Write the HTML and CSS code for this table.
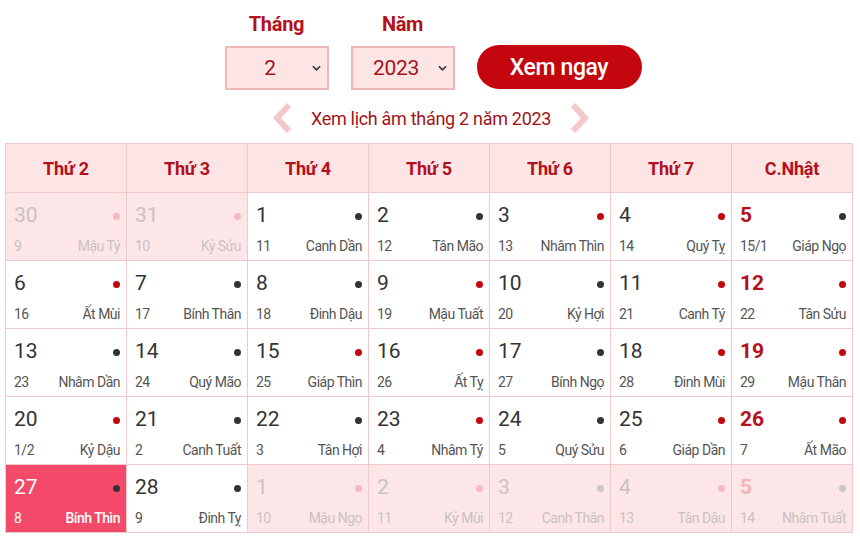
FILE: index.html
```html
<!DOCTYPE html>
<html lang="vi">
<head>
<meta charset="utf-8">
<link rel="stylesheet" href="styles.css">
</head>
<body>
<div class="page">
  <form class="picker">
    <div class="field">
      <label class="label">Tháng</label>
      <div class="select"><span>2</span><svg class="chev" viewBox="0 0 10 6" width="9" height="6"><path d="M1 1l4 4 4-4" fill="none" stroke="#333" stroke-width="1.8"/></svg></div>
    </div>
    <div class="field">
      <label class="label">Năm</label>
      <div class="select"><span>2023</span><svg class="chev" viewBox="0 0 10 6" width="9" height="6"><path d="M1 1l4 4 4-4" fill="none" stroke="#333" stroke-width="1.8"/></svg></div>
    </div>
    <button type="button" class="btn">Xem ngay</button>
  </form>
  <div class="nav">
    <svg class="arrow" viewBox="0 0 24 32" width="24" height="32"><path d="M18 3L6 16l12 13" fill="none" stroke="#f4c7c8" stroke-width="6" stroke-linejoin="miter"/></svg>
    <span class="nav-title">Xem lịch âm tháng 2 năm 2023</span>
    <svg class="arrow" viewBox="0 0 24 32" width="24" height="32"><path d="M6 3l12 13L6 29" fill="none" stroke="#f4c7c8" stroke-width="6" stroke-linejoin="miter"/></svg>
  </div>
  <div class="cal">
    <div class="hd">Thứ 2</div><div class="hd">Thứ 3</div><div class="hd">Thứ 4</div><div class="hd">Thứ 5</div><div class="hd">Thứ 6</div><div class="hd">Thứ 7</div><div class="hd">C.Nhật</div>

    <div class="cell off"><div class="top"><span class="d">30</span><i class="dot pk"></i></div><div class="bot"><span>9</span><span>Mậu Tý</span></div></div>
    <div class="cell off"><div class="top"><span class="d">31</span><i class="dot pk"></i></div><div class="bot"><span>10</span><span>Kỷ Sửu</span></div></div>
    <div class="cell"><div class="top"><span class="d">1</span><i class="dot dk"></i></div><div class="bot"><span>11</span><span>Canh Dần</span></div></div>
    <div class="cell"><div class="top"><span class="d">2</span><i class="dot dk"></i></div><div class="bot"><span>12</span><span>Tân Mão</span></div></div>
    <div class="cell"><div class="top"><span class="d">3</span><i class="dot rd"></i></div><div class="bot"><span>13</span><span>Nhâm Thìn</span></div></div>
    <div class="cell"><div class="top"><span class="d">4</span><i class="dot rd"></i></div><div class="bot"><span>14</span><span>Quý Tỵ</span></div></div>
    <div class="cell sun"><div class="top"><span class="d">5</span><i class="dot dk"></i></div><div class="bot"><span>15/1</span><span>Giáp Ngọ</span></div></div>

    <div class="cell"><div class="top"><span class="d">6</span><i class="dot rd"></i></div><div class="bot"><span>16</span><span>Ất Mùi</span></div></div>
    <div class="cell"><div class="top"><span class="d">7</span><i class="dot dk"></i></div><div class="bot"><span>17</span><span>Bính Thân</span></div></div>
    <div class="cell"><div class="top"><span class="d">8</span><i class="dot dk"></i></div><div class="bot"><span>18</span><span>Đinh Dậu</span></div></div>
    <div class="cell"><div class="top"><span class="d">9</span><i class="dot rd"></i></div><div class="bot"><span>19</span><span>Mậu Tuất</span></div></div>
    <div class="cell"><div class="top"><span class="d">10</span><i class="dot dk"></i></div><div class="bot"><span>20</span><span>Kỷ Hợi</span></div></div>
    <div class="cell"><div class="top"><span class="d">11</span><i class="dot rd"></i></div><div class="bot"><span>21</span><span>Canh Tý</span></div></div>
    <div class="cell sun"><div class="top"><span class="d">12</span><i class="dot rd"></i></div><div class="bot"><span>22</span><span>Tân Sửu</span></div></div>

    <div class="cell"><div class="top"><span class="d">13</span><i class="dot dk"></i></div><div class="bot"><span>23</span><span>Nhâm Dần</span></div></div>
    <div class="cell"><div class="top"><span class="d">14</span><i class="dot dk"></i></div><div class="bot"><span>24</span><span>Quý Mão</span></div></div>
    <div class="cell"><div class="top"><span class="d">15</span><i class="dot rd"></i></div><div class="bot"><span>25</span><span>Giáp Thìn</span></div></div>
    <div class="cell"><div class="top"><span class="d">16</span><i class="dot rd"></i></div><div class="bot"><span>26</span><span>Ất Tỵ</span></div></div>
    <div class="cell"><div class="top"><span class="d">17</span><i class="dot dk"></i></div><div class="bot"><span>27</span><span>Bính Ngọ</span></div></div>
    <div class="cell"><div class="top"><span class="d">18</span><i class="dot rd"></i></div><div class="bot"><span>28</span><span>Đinh Mùi</span></div></div>
    <div class="cell sun"><div class="top"><span class="d">19</span><i class="dot rd"></i></div><div class="bot"><span>29</span><span>Mậu Thân</span></div></div>

    <div class="cell"><div class="top"><span class="d">20</span><i class="dot rd"></i></div><div class="bot"><span>1/2</span><span>Kỷ Dậu</span></div></div>
    <div class="cell"><div class="top"><span class="d">21</span><i class="dot dk"></i></div><div class="bot"><span>2</span><span>Canh Tuất</span></div></div>
    <div class="cell"><div class="top"><span class="d">22</span><i class="dot dk"></i></div><div class="bot"><span>3</span><span>Tân Hợi</span></div></div>
    <div class="cell"><div class="top"><span class="d">23</span><i class="dot rd"></i></div><div class="bot"><span>4</span><span>Nhâm Tý</span></div></div>
    <div class="cell"><div class="top"><span class="d">24</span><i class="dot dk"></i></div><div class="bot"><span>5</span><span>Quý Sửu</span></div></div>
    <div class="cell"><div class="top"><span class="d">25</span><i class="dot rd"></i></div><div class="bot"><span>6</span><span>Giáp Dần</span></div></div>
    <div class="cell sun"><div class="top"><span class="d">26</span><i class="dot rd"></i></div><div class="bot"><span>7</span><span>Ất Mão</span></div></div>

    <div class="cell today"><div class="top"><span class="d">27</span><i class="dot dk"></i></div><div class="bot"><span>8</span><span>Bính Thìn</span></div></div>
    <div class="cell"><div class="top"><span class="d">28</span><i class="dot dk"></i></div><div class="bot"><span>9</span><span>Đinh Tỵ</span></div></div>
    <div class="cell off"><div class="top"><span class="d">1</span><i class="dot pk"></i></div><div class="bot"><span>10</span><span>Mậu Ngọ</span></div></div>
    <div class="cell off"><div class="top"><span class="d">2</span><i class="dot pk"></i></div><div class="bot"><span>11</span><span>Kỷ Mùi</span></div></div>
    <div class="cell off"><div class="top"><span class="d">3</span><i class="dot gy"></i></div><div class="bot"><span>12</span><span>Canh Thân</span></div></div>
    <div class="cell off"><div class="top"><span class="d">4</span><i class="dot pk"></i></div><div class="bot"><span>13</span><span>Tân Dậu</span></div></div>
    <div class="cell off sun"><div class="top"><span class="d">5</span><i class="dot gy"></i></div><div class="bot"><span>14</span><span>Nhâm Tuất</span></div></div>
  </div>
</div>
</body>
</html>
```

FILE: styles.css
```css
* { box-sizing: border-box; }
html, body { margin: 0; padding: 0; background: #fff; }
body { font-family: Roboto, "Liberation Sans", sans-serif; color: #333; }
.page { padding: 11px 5px 0 5px; width: 860px; }

.picker { display: flex; justify-content: center; align-items: flex-end; gap: 22px; padding-left: 6px; }
.field { display: flex; flex-direction: column; align-items: center; gap: 9px; }
.label { font-size: 20px; font-weight: 700; color: #b3111b; line-height: 26px; letter-spacing: -0.3px; }
.select {
  width: 104px; height: 44px; background: #fde5e6; border: 2px solid #f0b7b9;
  display: flex; align-items: center; justify-content: flex-end; padding-right: 6px;
}
.select span { flex: 1; text-align: center; font-size: 21px; color: #a0141b; padding-left: 6px; letter-spacing: -0.3px; }
.chev { margin-left: 4px; }
.btn {
  width: 165px; height: 44px; border: none; border-radius: 22px; background: #c4060e;
  color: #fff; font-family: inherit; font-size: 23px; font-weight: 500; margin-bottom: 1px; letter-spacing: -0.4px;
}

.nav { display: flex; justify-content: center; align-items: center; gap: 16px; height: 32px; margin-top: 12px; margin-left: 2px; }
.nav-title { font-size: 18px; color: #a0141b; letter-spacing: -0.3px; }

.cal {
  display: grid; grid-template-columns: repeat(7, 121px);
  grid-template-rows: 49px repeat(5, 68px);
  margin-top: 9px;
  border-top: 1px solid #efc9cb; border-left: 1px solid #efc9cb; width: 848px;
}
.hd, .cell { border-right: 1px solid #efc9cb; border-bottom: 1px solid #efc9cb; }
.hd {
  background: #fde5e6; color: #b3111b; font-weight: 700; font-size: 18px; letter-spacing: -0.2px;
  display: flex; align-items: center; justify-content: center;
}
.cell { padding: 8px 8px 0 8px; display: flex; flex-direction: column; background: #fff; }
.top { display: flex; justify-content: space-between; align-items: center; height: 28px; }
.d { font-size: 21px; color: #333; line-height: 28px; }
.dot { display: block; width: 7px; height: 7px; border-radius: 50%; margin-right: -2px; margin-top: 2px; }
.dk { background: #333; }
.rd { background: #c4060e; }
.pk { background: #f6b8bc; }
.gy { background: #c9c9c9; }
.bot { display: flex; justify-content: space-between; margin-top: 9px; font-size: 14px; color: #555; line-height: 16px; letter-spacing: -0.5px; }
.bot span:last-child { margin-right: -2px; }
.sun .d { color: #b3111b; font-weight: 700; }
.off { background: #fde6e7; }
.off .d, .off .bot { color: #c9c2c2; }
.off.sun .d { color: #f4b3b8; }
.today { background: #f34a6a; }
.today .d, .today .bot { color: #fff; }
.today .bot span:last-child { font-weight: 500; }
```
